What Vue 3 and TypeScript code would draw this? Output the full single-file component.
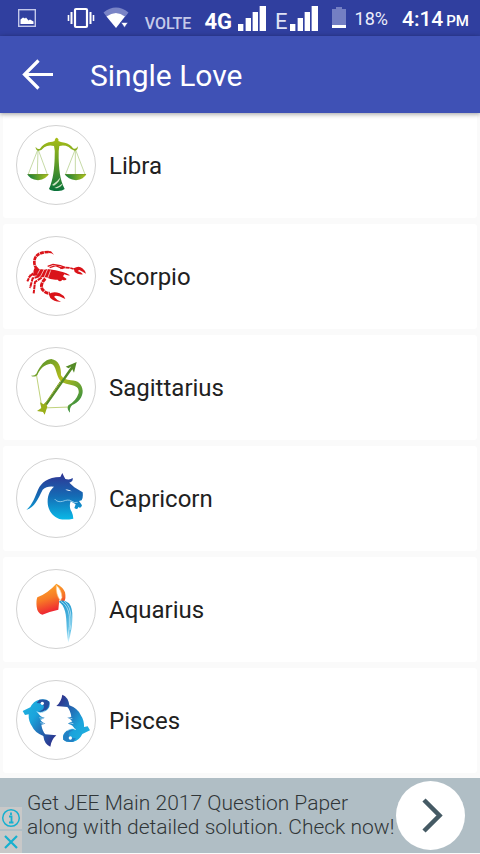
<script setup lang="ts">
interface Sign {
  id: string
  name: string
  viewBox: string
}

const signs: Sign[] = [
  { id: 'libra', name: 'Libra', viewBox: '21 24 234 234' },
  { id: 'scorpio', name: 'Scorpio', viewBox: '21 21 234 234' },
  { id: 'sagittarius', name: 'Sagittarius', viewBox: '21 24 234 234' },
  { id: 'capricorn', name: 'Capricorn', viewBox: '21 27 234 234' },
  { id: 'aquarius', name: 'Aquarius', viewBox: '21 24 234 234' },
  { id: 'pisces', name: 'Pisces', viewBox: '21 27 234 234' },
]
</script>

<template>
  <div class="screen">
    <div class="status">
      <svg class="s-picture" viewBox="0 0 20 20" width="20" height="20" aria-hidden="true">
        <rect x="1.7" y="1.7" width="16.6" height="16.6" fill="none" stroke="#c3c8ea" stroke-width="1.4" />
        <path d="M3.5 16V11.500L6 9.500L8 10.500L9 9.500L11.500 12.500L13 11.500L16.500 13.500V16Z" fill="#fff" />
      </svg>
      <svg class="s-vibrate" viewBox="0 0 28 22" width="28" height="22" aria-hidden="true">
        <rect x="8" y="2" width="12" height="18" rx="1" fill="none" stroke="#fff" stroke-width="2.2" />
        <path d="M4.500 5V17M23.500 5V17" stroke="#fff" stroke-width="2" />
        <path d="M1.500 8V14M26.500 8V14" stroke="#fff" stroke-width="1.600" />
      </svg>
      <svg class="s-wifi" viewBox="0 0 27 22" width="27" height="22" aria-hidden="true">
        <path d="M0.500 5.500Q13 -4.500 25.500 5.500L22 10Q13 3 4 10Z" fill="#7a84c6" />
        <path d="M3.500 9.500Q13 2.500 22 9.500L13 21Z" fill="#fff" />
        <path d="M18 15.500H25L21.500 20.500Z" fill="#fff" stroke="#303f9f" stroke-width="0.600" />
      </svg>
      <span class="volte">VOLTE</span>
      <span class="four">4G</span>
      <svg class="s-bars" viewBox="0 0 28 25" width="28" height="25" aria-hidden="true">
        <path d="M0 18H6V25H0ZM7 12H13V25H7ZM14 6H20V25H14ZM21 0H28V25H21Z" fill="#7a84c6" />
        <path d="M0 18H5V25H0ZM8 12H13V25H8ZM15 6H20V25H15ZM22 0H28V25H22Z" fill="#fff" />
      </svg>
      <span class="edge">E</span>
      <svg class="s-bars" viewBox="0 0 28 25" width="28" height="25" aria-hidden="true">
        <path d="M0 18H6V25H0ZM7 12H13V25H7ZM14 6H20V25H14ZM21 0H28V25H21Z" fill="#7a84c6" />
        <path d="M0 18H5V25H0ZM8 12H13V25H8ZM15 6H20V25H15ZM22 0H28V25H22Z" fill="#fff" />
      </svg>
      <svg class="s-battery" viewBox="0 0 14 22" width="14" height="22" aria-hidden="true">
        <path d="M4 0H10V2H14V18H0V2H4Z" fill="#747fc3" />
        <rect y="18" width="14" height="3" fill="#fff" />
      </svg>
      <span class="percent">18%</span>
      <span class="time">4:14</span>
      <span class="pm">PM</span>
    </div>

    <header class="bar">
      <button class="back" type="button" aria-label="Back">
        <svg viewBox="0 0 32 32" width="32" height="32" aria-hidden="true">
          <path d="M31 15.500H3M16.500 1.500L2.500 15.500L16.500 29.500" fill="none" stroke="#fff" stroke-width="3.200" />
        </svg>
      </button>
      <h1>Single Love</h1>
    </header>

    <main class="list">
      <button v-for="sign in signs" :key="sign.id" class="card" type="button">
        <span class="ring">
          <svg :viewBox="sign.viewBox" width="78" height="78" aria-hidden="true">
            <g v-if="sign.id === 'libra'">
              <defs>
                <linearGradient id="libra-beam" x1="0" y1="0" x2="0" y2="1">
                  <stop offset="0" stop-color="#a9bd16" />
                  <stop offset="0.450" stop-color="#669f25" />
                  <stop offset="1" stop-color="#08723a" />
                </linearGradient>
                <linearGradient id="libra-pan">
                  <stop offset="0" stop-color="#0c7b3d" />
                  <stop offset="1" stop-color="#b6c61a" />
                </linearGradient>
              </defs>
              <path d="M83 96L55 168M85 96L112 169M84 96L82 169M195 96L167 168M197 96L225 169M196 96L196 169" fill="none" stroke="#a9c77a" stroke-width="2" />
              <path d="M77 86Q81 95 90 92Q101 77 116 73Q130 71 134 69Q134 64 136 62Q140 56 144 62Q147 64 145 69Q151 73 164 74Q180 77 189 91Q198 96 203 85Q205 97 194 98Q184 96 176 87Q163 80 148 84Q145 98 146 120C147 151 149 184 164 213Q157 220 140 219Q124 219 117 213C130 185 133 150 134 120Q136 98 132 84Q114 80 103 88Q96 97 86 98Q76 96 77 86Z" fill="url(#libra-beam)" />
              <path d="M126 201Q143 190 150 179Q151 189 132 203ZM133 210Q150 204 158 196Q156 206 141 211Z" fill="#cfe3c4" />
              <path d="M52 168H116Q110 183 84 187Q58 184 52 168Z" fill="url(#libra-pan)" />
              <path d="M164 168H229Q222 184 198 187Q173 184 164 168Z" fill="url(#libra-pan)" />
              <path d="M53 170H115M165 170H228" stroke="#75942c" stroke-width="2" />
            </g>

            <g v-else-if="sign.id === 'scorpio'" fill="#da1319">
              <path d="M132 74L123 64L114 63L116 69L124 70Z" />
              <path d="M116 66Q73 66 73 97Q73 111 84 118" fill="none" stroke="#da1319" stroke-width="8" stroke-dasharray="12 2" />
              <path d="M76 111Q94 122 112 117Q139 120 158 126Q169 128 180 136Q170 137 163 133L159 139L170 147Q166 153 157 149Q150 158 143 149Q123 151 108 142Q88 143 71 132Q68 122 76 111Z" />
              <path d="M80 136L93 113M91 140L104 115M102 143L113 117M112 147L122 121" stroke="#fff" stroke-width="2" />
              <path d="M113 109L129 103L151 107L165 112M119 113L137 107L158 116" fill="none" stroke="#da1319" stroke-width="4" />
              <path d="M151 115Q172 110 191 117" fill="none" stroke="#da1319" stroke-width="5" stroke-dasharray="13 2" />
              <path d="M191 115Q207 106 217 115Q225 121 228 131Q215 123 208 120L203 123Q213 125 219 133Q203 135 194 126Z" />
              <path d="M83 133L61 136L52 154M87 139L68 145L60 174M95 143L75 156L71 190M70 130L56 142" fill="none" stroke="#da1319" stroke-width="6" stroke-dasharray="14 2" />
              <path d="M106 146Q89 163 97 178Q106 190 120 190" fill="none" stroke="#da1319" stroke-width="9" stroke-dasharray="13 2" />
              <path d="M116 192Q131 183 149 190Q161 195 166 207Q148 197 137 197L132 200Q141 211 153 215Q132 216 121 204Z" />
            </g>

            <g v-else-if="sign.id === 'sagittarius'">
              <defs>
                <linearGradient id="bow" x1="0" y1="0" x2="1" y2="1">
                  <stop offset="0" stop-color="#438b31" />
                  <stop offset="0.480" stop-color="#b5bd1b" />
                  <stop offset="1" stop-color="#16834a" />
                </linearGradient>
              </defs>
              <path d="M80 108L96 204L179 201" fill="none" stroke="#c0d27c" stroke-width="3" />
              <path d="M62 107Q75 108 79 101C92 75 104 59 124 57C145 60 154 80 153 106Q161 119 183 121C204 121 216 133 218 152C219 171 204 188 187 195Q177 204 180 218Q169 207 175 196Q199 182 206 159C208 143 198 137 181 134Q153 131 146 115C137 93 136 73 122 71C104 73 89 86 82 106Q75 113 62 107Z" fill="url(#bow)" />
              <path d="M105 193L184 79L176 85L167 80L200 66L192 98L187 88L111 196Z" fill="#558b27" />
              <path d="M107 186L112 200L104 224L99 216L81 213L94 204L90 187L101 193Z" fill="#9aaf19" />
              <path d="M103 195L151 124" stroke="#90a627" stroke-width="3" />
            </g>

            <g v-else-if="sign.id === 'capricorn'">
              <defs>
                <linearGradient id="goat" x1="0" y1="0" x2="0" y2="1">
                  <stop offset="0" stop-color="#303392" />
                  <stop offset="0.500" stop-color="#146cb5" />
                  <stop offset="1" stop-color="#0ab9e7" />
                </linearGradient>
              </defs>
              <path d="M49 180C68 163 76 138 84 119C94 97 113 82 151 81L157 69Q161 78 166 87Q180 91 188 84Q190 94 178 98L193 112L218 127Q220 143 215 151L207 153L216 166Q213 177 205 171Q203 181 193 174L197 163L182 154Q176 173 185 185Q189 193 190 206Q167 211 148 207C125 198 114 178 113 158C112 135 120 121 132 110Q111 107 98 119C83 149 74 171 49 180Z" fill="url(#goat)" />
              <path d="M166 119Q175 116 185 124Q174 123 166 119Z" fill="#fff" />
              <path d="M134 147Q142 158 158 154Q175 147 184 153Q193 160 203 157" fill="none" stroke="#c4ecfb" stroke-width="2" />
            </g>

            <g v-else-if="sign.id === 'aquarius'">
              <defs>
                <linearGradient id="pot" x1="0" y1="0" x2="0.300" y2="1">
                  <stop offset="0" stop-color="#ffb329" />
                  <stop offset="0.550" stop-color="#f77a26" />
                  <stop offset="1" stop-color="#ee2033" />
                </linearGradient>
                <linearGradient id="water" x1="0" y1="0" x2="0" y2="1">
                  <stop offset="0" stop-color="#259bd0" />
                  <stop offset="0.700" stop-color="#61c1e6" />
                  <stop offset="1" stop-color="#dff7ff" />
                </linearGradient>
              </defs>
              <path d="M139 65Q159 75 165 91Q169 110 162 120L148 113L145 143Q117 149 97 158Q82 153 80 134Q78 115 82 106Q114 93 139 65Z" fill="url(#pot)" />
              <path d="M139 70Q155 84 156 106L151 116Q137 98 139 70Z" fill="#fff" stroke="#ffc475" stroke-width="2" />
              <path d="M146 119Q160 110 177 124Q188 138 187 165Q187 201 175 242Q170 221 170 197C169 156 166 131 146 119Z" fill="url(#water)" />
              <path d="M153 118Q174 130 178 161Q180 194 174 224M162 117Q182 132 183 166Q184 188 180 204" fill="none" stroke="#d3f1fc" stroke-width="2" />
            </g>

            <g v-else>
              <defs>
                <linearGradient id="fish-body" x1="0" y1="0" x2="1" y2="1">
                  <stop offset="0" stop-color="#20b3df" />
                  <stop offset="0.350" stop-color="#1ba4dc" />
                  <stop offset="0.650" stop-color="#2463ae" />
                  <stop offset="1" stop-color="#302181" />
                </linearGradient>
              </defs>
              <g>
                <path d="M38 117L61 106Q70 87 88 83Q108 79 118 89Q123 105 108 116Q92 126 82 119Q90 135 104 137Q96 144 91 142Q94 151 106 155L94 158Q97 177 106 187L139 190Q124 203 121 224Q103 217 100 192Q74 182 66 163Q55 147 56 127L45 129Z" fill="url(#fish-body)" />
                <path d="M88 83Q109 80 118 89Q119 102 108 113Q98 120 86 119Q103 114 102 103Q99 94 80 93Z" fill="#264f9e" />
                <circle cx="97" cy="94" r="5" fill="#fff" />
                <path d="M80 119Q91 127 106 116M88 137L101 140M91 152L103 155" fill="none" stroke="#d6f3ff" stroke-width="2" />
              </g>
              <g transform="rotate(180 139 146)">
                <path d="M38 117L61 106Q70 87 88 83Q108 79 118 89Q123 105 108 116Q92 126 82 119Q90 135 104 137Q96 144 91 142Q94 151 106 155L94 158Q97 177 106 187L139 190Q124 203 121 224Q103 217 100 192Q74 182 66 163Q55 147 56 127L45 129Z" fill="url(#fish-body)" />
                <path d="M88 83Q109 80 118 89Q119 102 108 113Q98 120 86 119Q103 114 102 103Q99 94 80 93Z" fill="#2380c4" />
                <circle cx="97" cy="94" r="5" fill="#fff" />
                <path d="M80 119Q91 127 106 116M88 137L101 140M91 152L103 155" fill="none" stroke="#d6f3ff" stroke-width="2" />
              </g>
            </g>
          </svg>
        </span>
        <span class="name">{{ sign.name }}</span>
      </button>
    </main>

    <aside class="ad">
      <div class="choices">
        <button type="button" aria-label="About this ad">
          <svg viewBox="0 0 20 20" width="20" height="20" aria-hidden="true">
            <circle cx="10" cy="10" r="8.300" fill="none" stroke="#17b0cf" stroke-width="1.500" />
            <path d="M8 8.500H10.500V14.500M8 14.500H12.500M10 4.500V7" fill="none" stroke="#17b0cf" stroke-width="1.800" />
          </svg>
        </button>
        <button type="button" aria-label="Close ad">
          <svg viewBox="0 0 20 20" width="20" height="20" aria-hidden="true">
            <path d="M4 4L16 16M16 4L4 16" stroke="#17b0cf" stroke-width="2.200" />
          </svg>
        </button>
      </div>
      <a class="promo" href="#">
        <span class="copy">Get JEE Main 2017 Question Paper<br />along with detailed solution. Check now!</span>
        <span class="go">
          <svg viewBox="0 0 69 69" width="69" height="69" aria-hidden="true">
            <path d="M28 19L43.500 34.500L28 50" fill="none" stroke="#455a64" stroke-width="4.500" />
          </svg>
        </span>
      </a>
    </aside>
  </div>
</template>

<style>
body {
  background: #fafafa;
}
</style>

<style scoped>
.screen {
  display: flex;
  flex-direction: column;
  font-family: Roboto, "Liberation Sans", sans-serif;
  color: #212121;
}

button {
  margin: 0;
  padding: 0;
  border: 0;
  background: none;
  font: inherit;
  color: inherit;
  cursor: pointer;
}

svg {
  display: block;
  flex: none;
}

.status {
  display: flex;
  align-items: center;
  height: 36px;
  padding: 0 11px 0 17px;
  background: #303f9f;
  color: #fff;
  white-space: nowrap;
}

.s-picture {
  margin-right: auto;
}

.s-vibrate {
  margin-right: 8px;
}

.s-wifi {
  margin-right: 15px;
}

.volte {
  margin-right: 13px;
  padding-top: 12px;
  font-size: 16px;
  line-height: 20px;
  font-weight: 500;
  color: #c5cae9;
}

.four {
  margin-right: 6px;
  padding-top: 8px;
  font-size: 22px;
  line-height: 24px;
  font-weight: 700;
}

.edge {
  margin: 0 2px 0 9px;
  padding-top: 8px;
  font-size: 22px;
  line-height: 24px;
  color: #dfe2f5;
}

.s-battery {
  margin: 0 9px 0 14px;
}

.percent {
  margin-right: 14px;
  padding-top: 2px;
  font-size: 18px;
  line-height: 24px;
  color: #eceefa;
}

.time {
  margin-right: 3px;
  padding-top: 2px;
  font-size: 21px;
  line-height: 24px;
  font-weight: 500;
}

.pm {
  padding-top: 5px;
  font-size: 15px;
  line-height: 20px;
  font-weight: 500;
}

.bar {
  position: relative;
  display: flex;
  align-items: center;
  gap: 36px;
  height: 77px;
  padding: 0 22px;
  background: #3f51b5;
  color: #fff;
  box-shadow: 0 1px 5px rgba(0, 0, 0, 0.4);
}

h1 {
  margin: 0;
  padding-top: 2px;
  font-size: 30px;
  line-height: 36px;
  font-weight: 400;
}

.list {
  display: flex;
  flex-direction: column;
  gap: 6px;
  padding: 0 3px 5px;
}

.card {
  display: flex;
  align-items: center;
  gap: 13px;
  height: 105px;
  padding: 0 13px 2px;
  border-radius: 3px;
  background: #fff;
  text-align: left;
}

.ring {
  flex: none;
  border: 1px solid #d2d2d2;
  border-radius: 50%;
}

.name {
  padding-top: 2px;
  font-size: 24px;
  line-height: 32px;
}

.ad {
  display: flex;
  align-items: flex-end;
  height: 75px;
  background: #b0bec5;
}

.choices {
  display: flex;
  flex-direction: column;
  gap: 2px;
  width: 22px;
}

.choices button {
  display: flex;
  align-items: center;
  justify-content: center;
  height: 22px;
  background: #c8c8c8;
}

.promo {
  display: flex;
  flex: 1;
  align-items: center;
  justify-content: space-between;
  height: 75px;
  padding: 0 15px 0 5px;
  color: #303638;
  text-decoration: none;
}

.copy {
  padding-bottom: 2px;
  font-size: 21px;
  line-height: 24px;
  font-weight: 300;
  white-space: nowrap;
}

.go {
  flex: none;
  border-radius: 50%;
  background: #fff;
}
</style>
